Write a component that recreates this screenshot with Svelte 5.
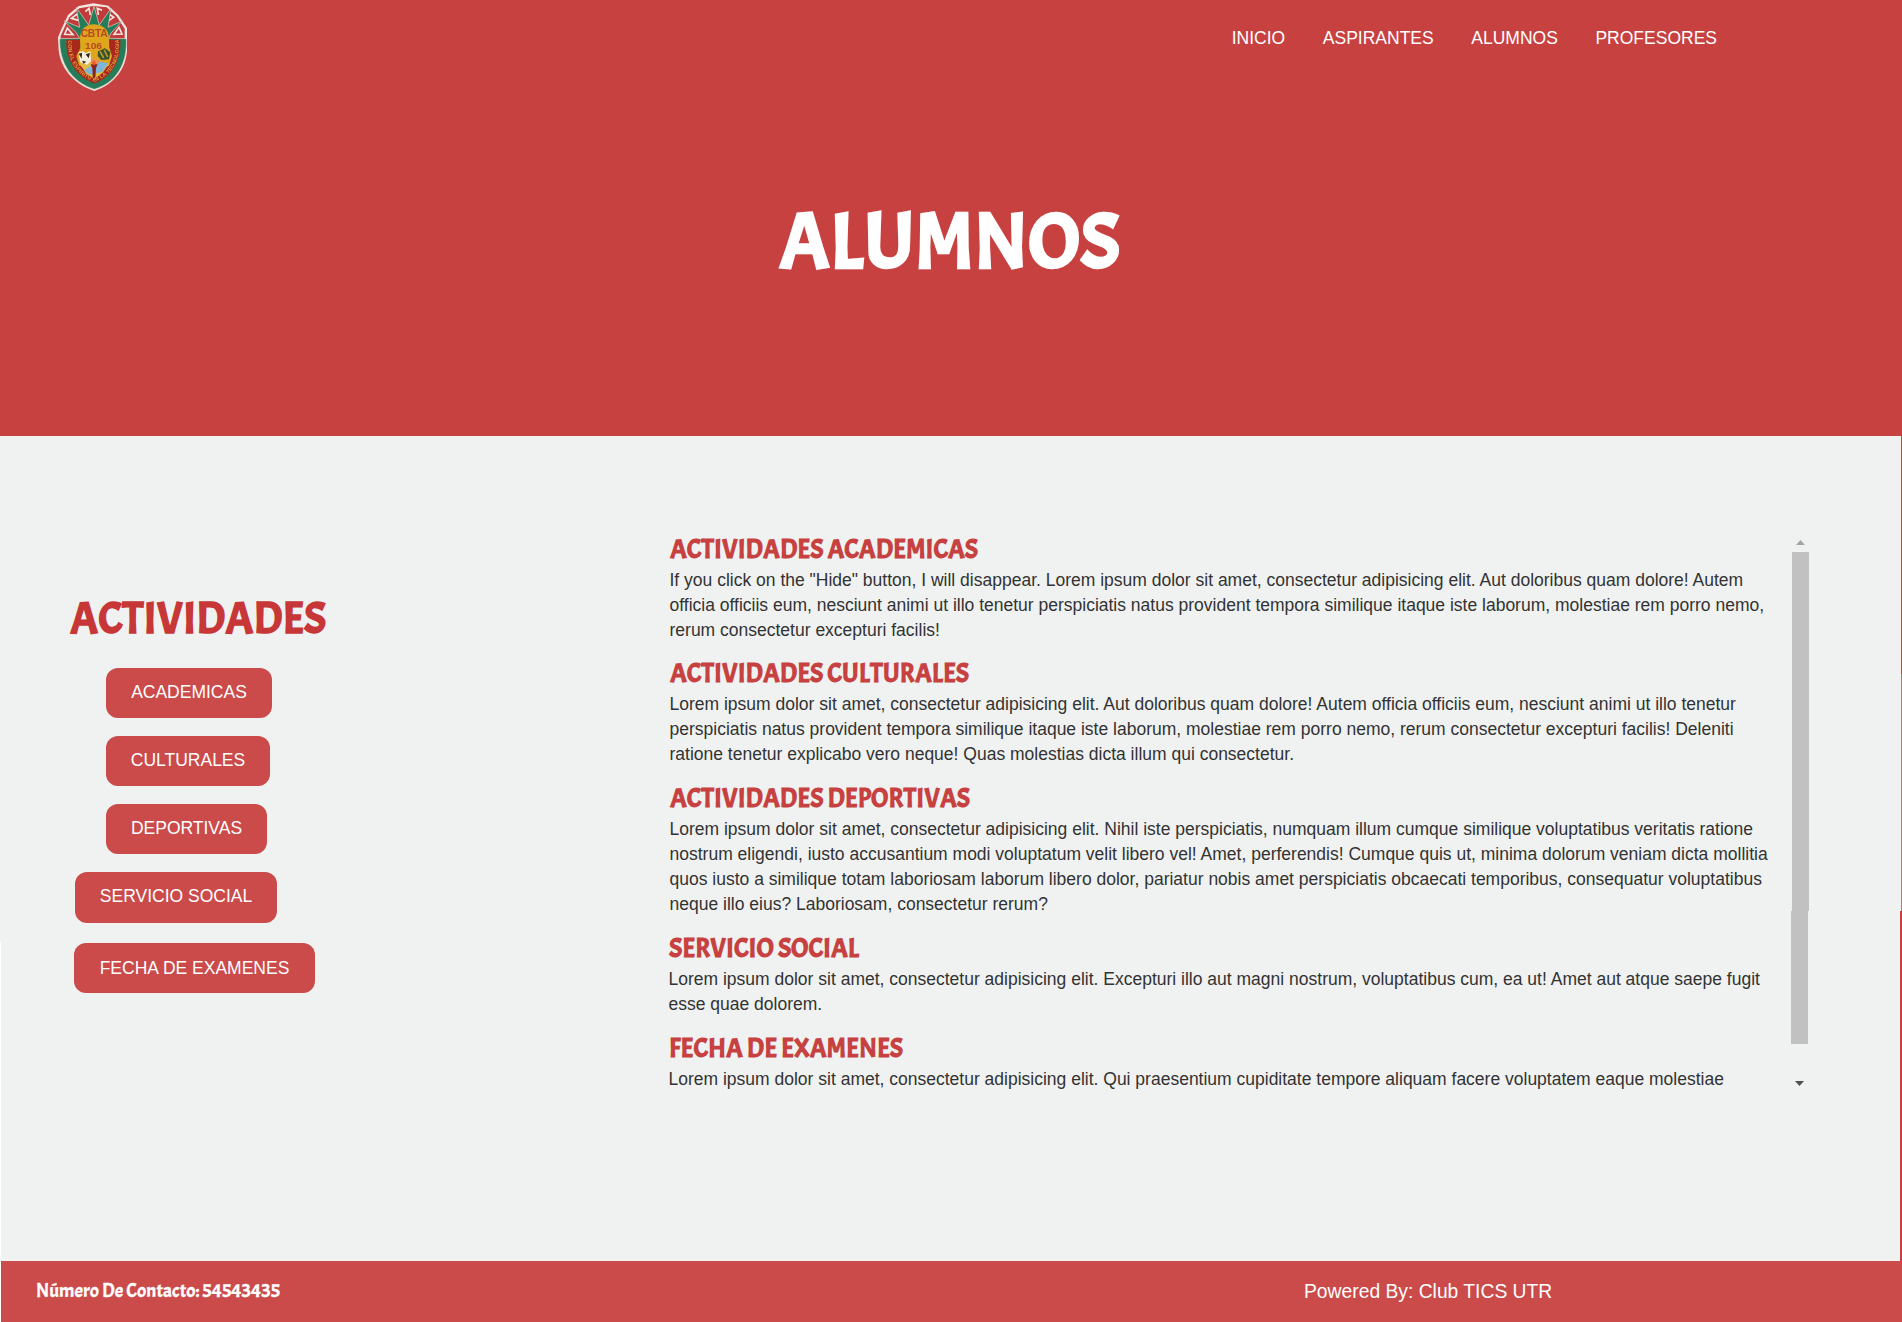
<script>
  const nav = ['INICIO', 'ASPIRANTES', 'ALUMNOS', 'PROFESORES'];

  const buttons = [
    { label: 'ACADEMICAS', kind: 'inset', width: 166 },
    { label: 'CULTURALES', kind: 'inset', width: 164 },
    { label: 'DEPORTIVAS', kind: 'inset', width: 161 },
    { label: 'SERVICIO SOCIAL', kind: 'social', width: 202 },
    { label: 'FECHA DE EXAMENES', kind: 'exams', width: 241 }
  ];

  const sections = [
    { title: 'ACTIVIDADES ACADEMICAS', width: 308, lines: [
      'If you click on the "Hide" button, I will disappear. Lorem ipsum dolor sit amet, consectetur adipisicing elit. Aut doloribus quam dolore! Autem',
      'officia officiis eum, nesciunt animi ut illo tenetur perspiciatis natus provident tempora similique itaque iste laborum, molestiae rem porro nemo,',
      'rerum consectetur excepturi facilis!'
    ] },
    { title: 'ACTIVIDADES CULTURALES', width: 299, lines: [
      'Lorem ipsum dolor sit amet, consectetur adipisicing elit. Aut doloribus quam dolore! Autem officia officiis eum, nesciunt animi ut illo tenetur',
      'perspiciatis natus provident tempora similique itaque iste laborum, molestiae rem porro nemo, rerum consectetur excepturi facilis! Deleniti',
      'ratione tenetur explicabo vero neque! Quas molestias dicta illum qui consectetur.'
    ] },
    { title: 'ACTIVIDADES DEPORTIVAS', width: 300, lines: [
      'Lorem ipsum dolor sit amet, consectetur adipisicing elit. Nihil iste perspiciatis, numquam illum cumque similique voluptatibus veritatis ratione',
      'nostrum eligendi, iusto accusantium modi voluptatum velit libero vel! Amet, perferendis! Cumque quis ut, minima dolorum veniam dicta mollitia',
      'quos iusto a similique totam laboriosam laborum libero dolor, pariatur nobis amet perspiciatis obcaecati temporibus, consequatur voluptatibus',
      'neque illo eius? Laboriosam, consectetur rerum?'
    ] },
    { title: 'SERVICIO SOCIAL', width: 190, lines: [
      'Lorem ipsum dolor sit amet, consectetur adipisicing elit. Excepturi illo aut magni nostrum, voluptatibus cum, ea ut! Amet aut atque saepe fugit',
      'esse quae dolorem.'
    ] },
    { title: 'FECHA DE EXAMENES', width: 234, lines: [
      'Lorem ipsum dolor sit amet, consectetur adipisicing elit. Qui praesentium cupiditate tempore aliquam facere voluptatem eaque molestiae'
    ] }
  ];
</script>

{#snippet display(text, width, height, baseline)}
  <svg class="display" {width} {height} viewBox="0 0 {width} {height}">
    <text x="0" y={baseline} textLength={width} lengthAdjust="spacingAndGlyphs">{text}</text>
  </svg>
{/snippet}

<div class="page">
  <header>
    <div class="bar">
      <svg class="crest" viewBox="0 0 330 300" width="110" height="100">
        <path d="M160 10 L205 17 L235 45 L261 84 L261 150 C258 205 225 252 163 273 C100 252 62 205 56 150 L54 112 L64 88 L84 45 L116 18 Z" fill="#f3e6e0" />
        <path d="M160 18 L200 22 L229 48 L254 86 L254 120 L62 120 L62 108 L71 88 L88 52 L118 25 Z" fill="#c23a3a" />
        <g fill="none" stroke="#f3e6e0" stroke-width="5">
          <path d="M136 35 L147 25 L151 45 M175 45 L172 25 L186 31 M94 55 L111 42 L119 62 Z M207 42 L221 52 L203 64 Z M74 103 L82 84 L99 104 Z M237 82 L246 102 L222 103 Z" />
        </g>
        <path d="M59 116 L119 115 L109 98 L73 63 L119 82 L109 23 L146 75 L162 19 L178 75 L213 25 L204 82 L247 63 L213 99 L206 115 L259 116 C263 190 230 248 163 268 C96 247 57 190 59 116 Z" fill="#257c59" stroke="#e8d6cc" stroke-width="2" />
        <path d="M79 119 L121 119 L121 154 L109 181 L139 207 L163 211 L188 207 L214 178 L207 119 L241 119 C245 175 218 232 163 250 C109 231 76 180 79 119 Z" fill="#a8291c" />
        <path d="M120 116 Q121 74 163 73 Q205 76 207 116 L207 140 L216 168 L207 197 L163 218 L117 196 L109 168 L121 145 Z" fill="#dfa51d" />
        <path d="M118 190 L208 190 L188 218 L163 237 L139 221 Z" fill="#e4bb42" />
        <path d="M132 211 L175 184 L205 190 L186 216 L148 224 Z" fill="#7cb4dc" />
        <path d="M115 157 L129 153 L137 160 L151 153 L154 184 L141 194 L120 187 Z" fill="#f4eddc" />
        <path d="M116 161 L126 158 L125 176 Z M137 163 L150 159 L146 175 Z M126 182 L139 185 L131 191 Z" fill="#2b251b" />
        <path d="M174 154 L195 145 L211 157 L207 178 L184 180 L173 168 Z" fill="#355629" />
        <path d="M180 154 L191 174 M193 150 L203 171" stroke="#c29835" stroke-width="5" />
        <path d="M152 178 L174 176 L178 190 L155 194 Z" fill="#e79050" />
        <path d="M152 193 H173 L168 205 L165 249 H159 L157 205 Z" fill="#8c241d" />
        <path d="M162 179 L168 189 L162 196 L155 189 Z" fill="#ef5b31" />
        <g class="crest-text">
          <text x="122" y="111" font-size="31" textLength="81">CBTA</text>
          <text x="135" y="147" font-size="25" textLength="51" lengthAdjust="spacingAndGlyphs">106</text>
        </g>
        <path id="motto" d="M84 121 C82 180 109 226 163 245 C220 225 240 182 237 121" fill="none" />
        <text class="motto"><textPath href="#motto" textLength="318">CON EL ESPIRITU EN LA TECNOLOGIA</textPath></text>
      </svg>
      <nav>
        {#each nav as item}<a href="#top">{item}</a>{/each}
      </nav>
    </div>
    <h1>{@render display('ALUMNOS', 341, 80, 69)}</h1>
  </header>

  <main>
    <aside>
      <h2>{@render display('ACTIVIDADES', 256, 46, 40)}</h2>
      {#each buttons as b}
        <button class={b.kind} style:width="{b.width}px">{b.label}</button>
      {/each}
    </aside>
    <div class="scroller">
      <div class="content">
        {#each sections as s}
          <section>
            <h3>{@render display(s.title, s.width, 28, 23)}</h3>
            {#each s.lines as line}<p>{line}</p>{/each}
          </section>
        {/each}
      </div>
      <div class="scrollbar">
        <svg width="17" height="17" viewBox="0 0 17 17"><path d="M4 10 L8.5 5 L13 10 Z" fill="#a3a3a3" /></svg>
        <div class="thumb"></div>
        <div class="thumb lower"></div>
        <svg class="down" width="17" height="17" viewBox="0 0 17 17"><path d="M4 6 L8.5 11 L13 6 Z" fill="#505050" /></svg>
      </div>
    </div>
    <div class="edge">
      <i class="edge-top"></i>
      <i class="edge-middle"></i>
      <i class="edge-bottom"></i>
    </div>
  </main>

  <footer>
    <strong>{@render display('Número De Contacto: 54543435', 244, 24, 18)}</strong>
    <span>Powered By: Club TICS UTR</span>
  </footer>
</div>

<style>
  :global(body) { margin: 0; }
  .page {
    width: 1902px;
    height: 1322px;
    display: flex;
    flex-direction: column;
    overflow: hidden;
    background: linear-gradient(#fff, #fff) 0 941px / 1px 400px no-repeat #eff2f1;
    font-family: Arial, 'Liberation Sans', sans-serif;
    color: #333;
  }
  h1, h2, h3, p { margin: 0; }
  .display { display: block; overflow: visible; font-family: Acme, Lato, sans-serif; font-weight: 700; fill: currentColor; }

  header { height: 436px; background: #c84141; color: #fff; flex: none; }
  .bar { display: flex; justify-content: space-between; height: 100px; padding: 0 185px 0 40px; }
  .crest { flex: none; filter: blur(0.3px); }
  .crest-text { font-family: 'Liberation Sans', sans-serif; font-weight: 700; fill: #b64a20; }
  .motto { font-family: 'Liberation Sans', sans-serif; font-weight: 700; font-size: 16px; fill: #dc9b3c; }
  nav { display: flex; gap: 37.6px; padding-top: 28px; }
  nav a { color: #fff; text-decoration: none; font-size: 17.5px; line-height: 21px; }
  h1 { display: flex; justify-content: center; padding: 99px 3px 0 0; font-size: 80px; }

  main { height: 825px; flex: none; display: flex; }
  aside { width: 599.5px; padding: 157px 0 0 70px; display: flex; flex-direction: column; align-items: flex-start; flex: none; }
  h2 { color: #c83737; font-size: 44px; margin-bottom: 29px; }
  button {
    height: 50px;
    border: 0;
    border-radius: 12px;
    margin: 0 0 18px;
    padding: 0 0 1px;
    background: #cb4a4a;
    color: #fff;
    font: 17.5px/21px Arial, 'Liberation Sans', sans-serif;
    white-space: nowrap;
  }
  .inset { margin-left: 36px; }
  .social { margin-left: 5px; height: 51px; margin-bottom: 20px; padding-bottom: 3px; }
  .exams { margin-left: 4px; padding-bottom: 0; }

  .scroller { display: flex; justify-content: space-between; width: 1139.5px; height: 557px; margin-top: 99px; flex: none; }
  section { margin-bottom: 17px; }
  section:first-child { margin-bottom: 16px; }
  section:nth-child(n + 4) { margin-left: -1px; }
  h3 { color: #c84141; font-size: 27px; height: 33px; }
  p { font-size: 17.5px; line-height: 25px; white-space: nowrap; }
  .scrollbar { width: 17px; display: flex; flex-direction: column; }
  .thumb { height: 359px; background: #c1c1c1; }
  .lower { height: 133px; margin: 0 1px auto -1px; }
  .down { margin-left: -1px; }

  .edge { flex: 1; display: flex; flex-direction: column; align-items: flex-end; }
  .edge-top { width: 1px; height: 238px; background: #c84141; }
  .edge-middle { width: 1px; height: 237px; background: #bd7477; }
  .edge-bottom { width: 2px; flex: 1; background: #c84141; }

  footer {
    flex: 1;
    display: flex;
    align-items: center;
    margin-left: 1px;
    background: #cb4a4a;
    color: #fff;
  }
  strong { width: 1268px; padding: 0 0 1px 35px; font-size: 20px; }
  footer :global(.display) { font-weight: 400; stroke: currentColor; stroke-width: 0.35px; }
  footer span { font-size: 19.3px; }
</style>
